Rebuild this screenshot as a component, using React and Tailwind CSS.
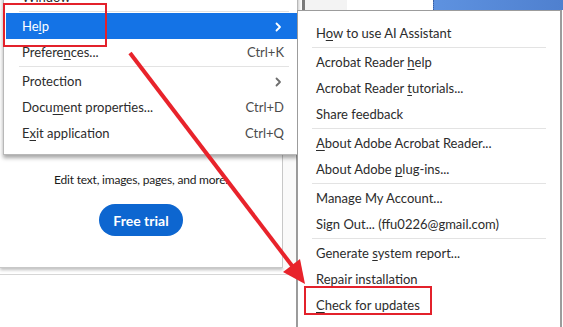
const font = { fontFamily: "Lato, 'Open Sans', sans-serif" };

function Label({ pre = "", k = "", post = "" }) {
  return (
    <span>
      {pre}
      {k && <span className="underline underline-offset-2">{k}</span>}
      {post}
    </span>
  );
}

function Chevron({ className }) {
  return (
    <svg width="7" height="10" viewBox="0 0 7 10" className={className}>
      <path d="M1.5 1.5L5 5L1.5 8.5" fill="none" stroke="currentColor" strokeWidth="1.8" strokeLinecap="round" strokeLinejoin="round" />
    </svg>
  );
}

function MenuRow({ children, shortcut, sub, active }) {
  return (
    <div
      className={`flex h-[26px] items-center pl-[16px] pt-px ${
        active ? "bg-[#1473e6] text-white" : "text-[#2c2c2c]"
      }`}
    >
      <div className="flex-1">{children}</div>
      {shortcut && <div className="pr-[13px] text-[#4b4b4b]">{shortcut}</div>}
      {sub && (
        <div className={`pr-[15px] ${active ? "text-white" : "text-[#6e6e6e]"}`}>
          <Chevron />
        </div>
      )}
    </div>
  );
}

function Sep({ className = "" }) {
  return (
    <div className={`flex h-[3px] items-center ${className}`}>
      <div className="h-px w-full bg-[#e3e3e3]" />
    </div>
  );
}

function SubRow({ children }) {
  return <div className="flex h-[26px] items-center pl-[18px] pt-px text-[#2c2c2c]">{children}</div>;
}

export default function App() {
  return (
    <div className="relative flex h-[327px] w-[563px] flex-col overflow-hidden bg-white text-[13px]" style={font}>
      {/* background window chrome */}
      <div className="flex h-[10px] shrink-0">
        <div className="w-[302px] bg-white" />
        <div className="w-[3px] bg-[#7a7a7a]" />
        <div className="w-[42px] bg-[#f3f3f3]" />
        <div className="w-[86px] bg-white" />
        <div className="flex-1 border-l border-dotted border-[#3b5fa0] bg-gradient-to-r from-[#5e92e0] to-[#4f80cf]" />
      </div>

      <div className="flex flex-1">
        <div className="flex w-[297px] flex-col border-r border-[#9a9a9a]">
          <div className="flex">
            <div className="flex h-[258px] w-[283px] flex-col items-center justify-end border-b border-r border-[#c8c8c8] pb-[31px] shadow-[0_2px_3px_rgba(0,0,0,0.25)]">
              <p className="mb-[15px] text-[12px] tracking-[-0.2px] text-[#1b1b1b]">
                Edit text, images, pages, and more.
              </p>
              <button className="h-[32px] w-[84px] rounded-full bg-[#0d66d0] text-[14px] font-bold text-white">
                Free trial
              </button>
            </div>
            <div className="flex-1 bg-[#fafafa]" />
          </div>
          <div className="mt-[6px] border-t border-[#d6d6d6]" />
        </div>
      </div>

      {/* main menu */}
      <div className="absolute left-[3px] top-[-17px] w-[295px] border border-[#b8b8b8] bg-white pb-[8px] pl-[2px] shadow-[0_3px_4px_rgba(0,0,0,0.35)]">
        <MenuRow>
          <Label pre="Window" />
        </MenuRow>
        <Sep className="ml-[13px] mr-[8px]" />
        <MenuRow sub active>
          <Label pre="He" k="l" post="p" />
        </MenuRow>
        <MenuRow shortcut="Ctrl+K">
          <Label pre="Prefere" k="n" post="ces..." />
        </MenuRow>
        <Sep className="ml-[13px] mr-[8px]" />
        <MenuRow sub>
          <Label pre="Protection" />
        </MenuRow>
        <MenuRow shortcut="Ctrl+D">
          <Label pre="Docu" k="m" post="ent properties..." />
        </MenuRow>
        <MenuRow shortcut="Ctrl+Q">
          <Label pre="E" k="x" post="it application" />
        </MenuRow>
      </div>

      {/* help submenu */}
      <div className="absolute left-[297px] top-[10px] h-[330px] w-[265px] border border-r-2 border-[#9c9c9c] bg-white pt-[9px]">
        <SubRow>
          <Label pre="H" k="o" post="w to use AI Assistant" />
        </SubRow>
        <Sep className="mx-[14px]" />
        <SubRow>
          <Label pre="Acrobat Reader " k="h" post="elp" />
        </SubRow>
        <SubRow>
          <Label pre="Acrobat Reader " k="t" post="utorials..." />
        </SubRow>
        <SubRow>
          <Label pre="Share feedback" />
        </SubRow>
        <Sep className="mx-[14px]" />
        <SubRow>
          <Label k="A" post="bout Adobe Acrobat Reader..." />
        </SubRow>
        <SubRow>
          <Label pre="About Adobe " k="p" post="lug-ins..." />
        </SubRow>
        <Sep className="mx-[14px]" />
        <SubRow>
          <Label pre="Manage My Account..." />
        </SubRow>
        <SubRow>
          <Label pre="Sign Out... (ffu0226@gmail.com)" />
        </SubRow>
        <Sep className="mx-[14px]" />
        <SubRow>
          <Label pre="Generate " k="s" post="ystem report..." />
        </SubRow>
        <SubRow>
          <Label pre="Repair installation" />
        </SubRow>
        <SubRow>
          <Label k="C" post="heck for updates" />
        </SubRow>
      </div>

      {/* annotations */}
      <div className="absolute left-[3px] top-[3px] h-[44px] w-[104px] border-2 border-[#e3212b]" />
      <div className="absolute left-[304px] top-[286px] h-[29px] w-[128px] border-2 border-[#e3212b]" />
      <svg className="pointer-events-none absolute left-0 top-0" width="563" height="327">
        <line x1="130" y1="53" x2="293" y2="267" stroke="#e8232b" strokeWidth="4" />
        <polygon points="305,284 283,272 300,259" fill="#e8232b" />
      </svg>
    </div>
  );
}
